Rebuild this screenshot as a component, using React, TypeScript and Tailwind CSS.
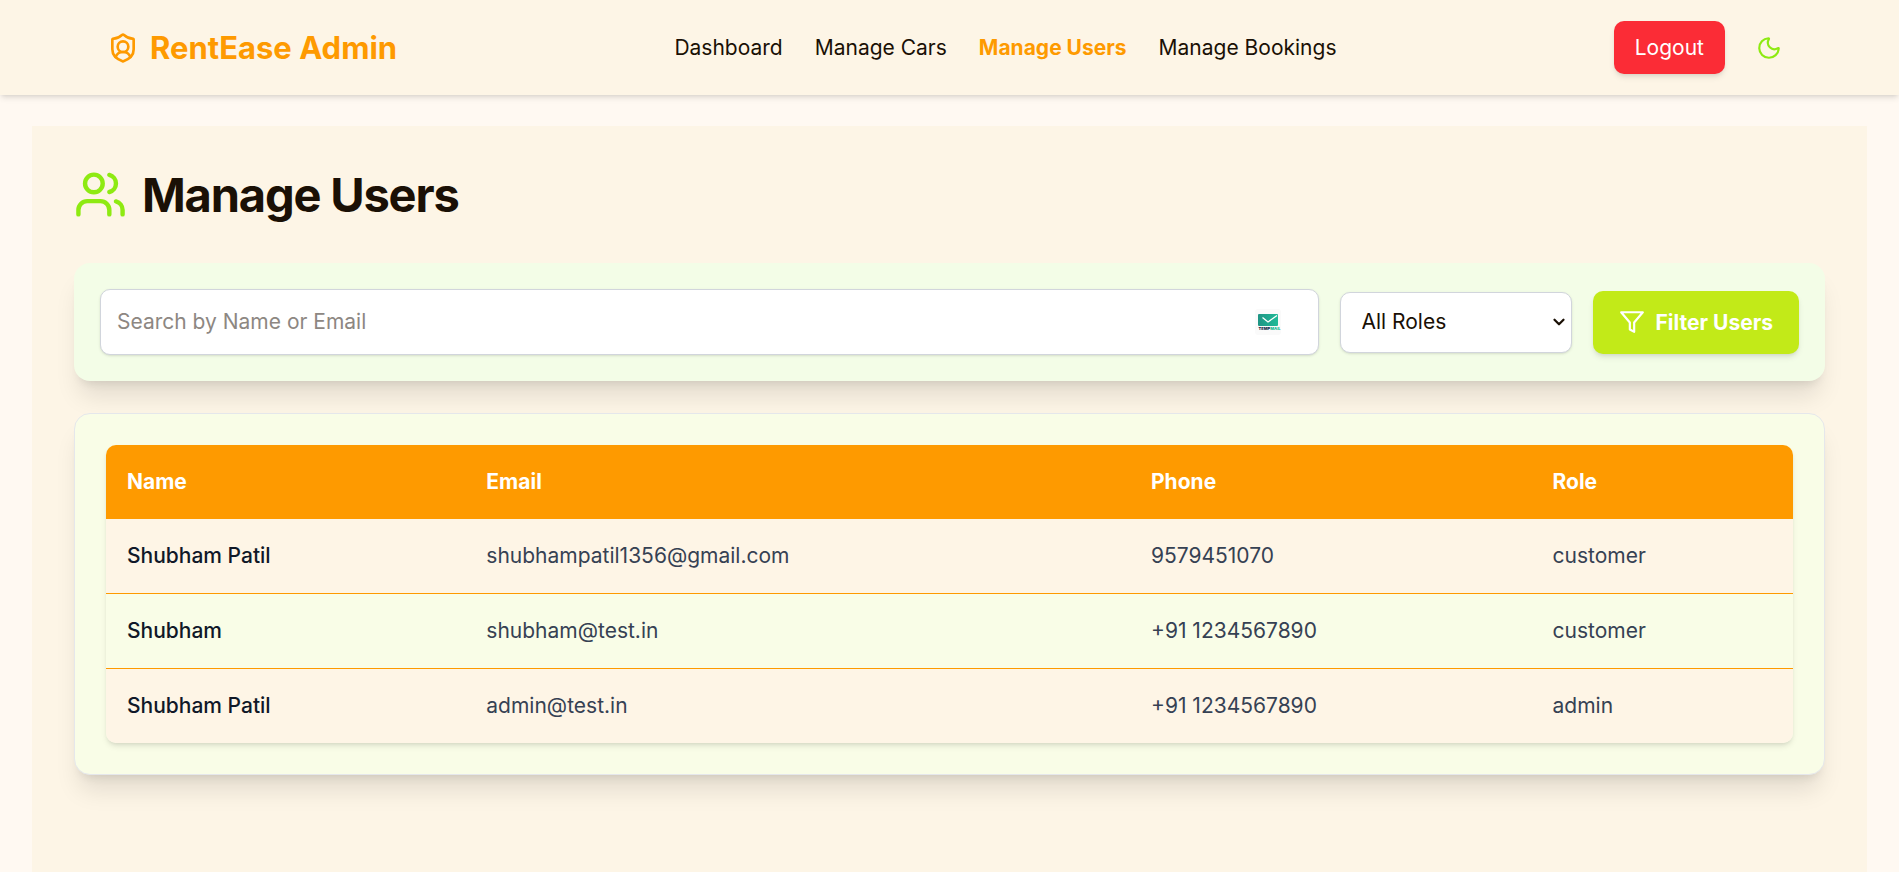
import { useState } from "react";
import { ChevronDown, Moon, ShieldUser, Users } from "lucide-react";
import { FiFilter } from "react-icons/fi";

type User = { name: string; email: string; phone: string; role: string };

const users: User[] = [
  { name: "Shubham Patil", email: "shubhampatil1356@gmail.com", phone: "9579451070", role: "customer" },
  { name: "Shubham", email: "shubham@test.in", phone: "+91 1234567890", role: "customer" },
  { name: "Shubham Patil", email: "admin@test.in", phone: "+91 1234567890", role: "admin" },
];

const links = ["Dashboard", "Manage Cars", "Manage Users", "Manage Bookings"];

function TempMailIcon() {
  return (
    <svg viewBox="0 0 26 26" className="size-[26px]" aria-hidden="true">
      <defs>
        <linearGradient id="mail" x1="0" x2="1" y1="0" y2="0">
          <stop offset="0" stopColor="#1f9484" />
          <stop offset="1" stopColor="#1fbb98" />
        </linearGradient>
      </defs>
      <rect width="26" height="26" rx="3" fill="#fafafa" />
      <rect x="3" y="5" width="20" height="12" rx="1" fill="url(#mail)" />
      <path d="M7.500 8.500l5.500 4.500 9-6.500" fill="none" stroke="#fff" strokeWidth="1.300" />
      <text x="3.500" y="21" fontSize="4" fontWeight="900" fontFamily="Inter, sans-serif" fill="#1e2f4d">
        TEMP<tspan fill="#1fbb98">MAIL</tspan>
      </text>
    </svg>
  );
}

function Header() {
  return (
    <header className="relative bg-[#fdf5e6] shadow-md">
      <div className="flex items-center justify-between px-[107px] py-[21px]">
        <a href="#" className="flex items-center gap-[11px] text-[31px] leading-[42px] font-bold text-[#fe9a00]">
          <ShieldUser className="size-8" />
          RentEase Admin
        </a>
        <nav className="flex gap-8">
          {links.map((link) => (
            <a
              key={link}
              href="#"
              className={link === "Manage Users" ? "font-bold text-[#fe9a00]" : "text-[#1a1005]"}
            >
              {link}
            </a>
          ))}
        </nav>
        <div className="flex items-center gap-[21px]">
          <button
            type="button"
            className="rounded-[10px] bg-[#fb2c36] px-[21px] py-[11px] leading-[31px] text-white shadow-md"
          >
            Logout
          </button>
          <button type="button" aria-label="Toggle theme" className="p-[10px] text-[#8eea12]">
            <Moon className="size-[26px]" strokeWidth={2} />
          </button>
        </div>
      </div>
    </header>
  );
}

export default function App() {
  const [query, setQuery] = useState("");
  const [role, setRole] = useState("all");

  return (
    <div className="flex min-h-screen flex-col bg-[#fff9f2] font-['Inter',sans-serif] text-[21px] leading-8 text-[#1a1005]">
      <Header />
      <main className="mx-8 mt-[31px] flex-1 bg-[#fdf5e6] p-[42px]">
        <h1 className="mb-[42px] flex items-center gap-[15px] text-[47px] leading-[53px] font-bold tracking-tight">
          <Users className="size-[53px] text-[#8eea12]" />
          Manage Users
        </h1>

        <form
          className="mb-8 flex items-center gap-[21px] rounded-2xl bg-[#f3fde7] p-[26px] shadow-xl"
          onSubmit={(event) => event.preventDefault()}
        >
          <div className="relative flex-1">
            <input
              type="text"
              aria-label="Search by Name or Email"
              placeholder="Search by Name or Email"
              value={query}
              onChange={(event) => setQuery(event.target.value)}
              className="block w-full rounded-[10px] border border-[#d1d5dc] bg-white p-4 shadow-sm placeholder:text-[#8d8782]"
            />
            <span className="absolute top-1/2 right-[38px] -translate-y-1/2">
              <TempMailIcon />
            </span>
          </div>
          <div className="relative">
            <select
              aria-label="Role"
              value={role}
              onChange={(event) => setRole(event.target.value)}
              className="block h-[61px] w-[232px] appearance-none rounded-[10px] border border-[#d1d5dc] bg-white px-[21px] shadow-sm"
            >
              <option value="all">All Roles</option>
              <option value="customer">customer</option>
              <option value="admin">admin</option>
            </select>
            <ChevronDown
              className="pointer-events-none absolute top-1/2 right-1 size-[18px] -translate-y-1/2"
              strokeWidth={3}
            />
          </div>
          <button
            type="submit"
            className="flex items-center gap-[11px] rounded-[10px] bg-[#c2ea18] px-[26px] py-4 leading-[31px] font-bold text-white shadow-md"
          >
            <FiFilter className="size-[26px]" strokeWidth={2} />
            Filter Users
          </button>
        </form>

        <section className="rounded-2xl border border-gray-200 bg-[#f9fde7] p-[31px] shadow-xl">
          <div className="overflow-hidden rounded-[10px] shadow-md">
            <table className="w-full table-fixed text-left">
              <thead className="bg-[#fe9a00] text-white">
                <tr>
                  <th className="w-[21.3%] p-[21px] font-bold">Name</th>
                  <th className="w-[39.4%] p-[21px] font-bold">Email</th>
                  <th className="w-[23.8%] p-[21px] font-bold">Phone</th>
                  <th className="p-[21px] font-bold">Role</th>
                </tr>
              </thead>
              <tbody className="divide-y divide-[#fe9a00]">
                {users.map((user) => (
                  <tr key={user.email} className="bg-[#fef5e6] text-[#364153] even:bg-[#f9fde7]">
                    <td className="p-[21px] font-medium text-[#101828]">{user.name}</td>
                    <td className="p-[21px]">{user.email}</td>
                    <td className="p-[21px]">{user.phone}</td>
                    <td className="p-[21px]">{user.role}</td>
                  </tr>
                ))}
              </tbody>
            </table>
          </div>
        </section>
      </main>
    </div>
  );
}
